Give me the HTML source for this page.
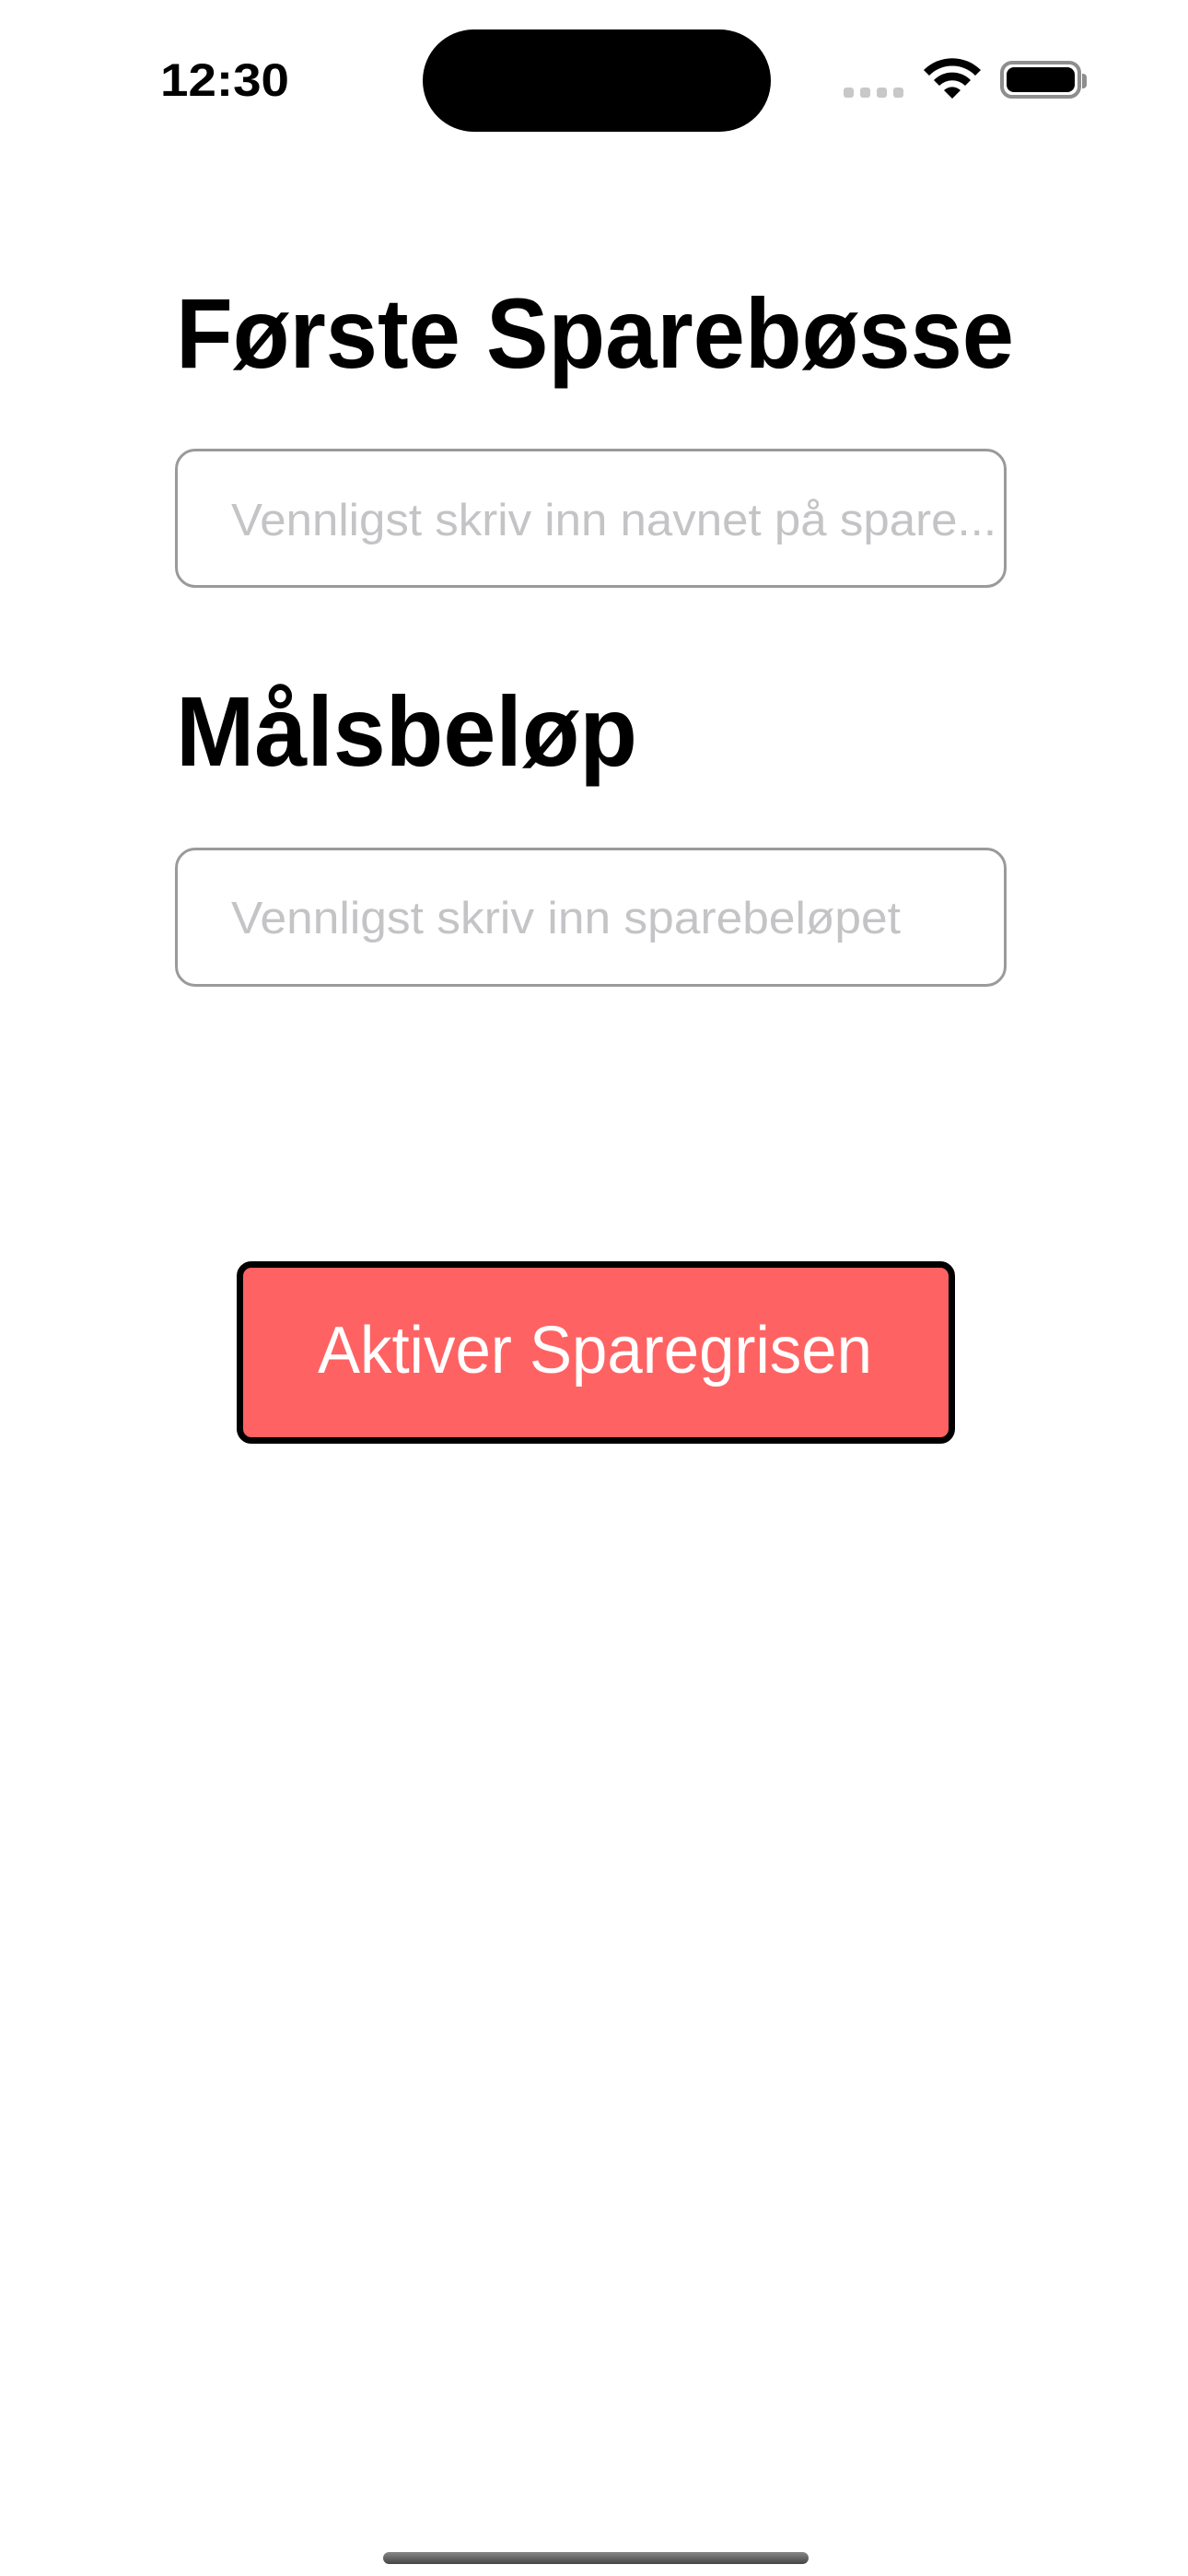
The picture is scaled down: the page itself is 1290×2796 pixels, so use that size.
<!DOCTYPE html>
<html><head><meta charset="utf-8">
<style>
html,body{margin:0;padding:0;background:#fff;}
body{width:1290px;height:2796px;position:relative;overflow:hidden;font-family:"Liberation Sans",sans-serif;}
.abs{position:absolute;}
.island{left:459px;top:32px;width:378px;height:111px;background:#000;border-radius:56px;}
.dot{top:95px;width:11px;height:11px;border-radius:3px;background:#c8c8c8;}
.input{left:190px;width:903px;height:151px;border:3px solid #9a9a9a;border-radius:22px;box-sizing:border-box;}
.btn{left:257px;top:1369px;width:780px;height:198px;background:#ff6262;border:7px solid #000;border-radius:16px;box-sizing:border-box;}
.home{left:416px;top:2770px;width:462px;height:13px;border-radius:7px;background:linear-gradient(#888,#444);}
svg{position:absolute;left:0;top:0;}
</style></head><body>
<div class="abs island"></div>
<div class="abs dot" style="left:916px"></div>
<div class="abs dot" style="left:934px"></div>
<div class="abs dot" style="left:952px"></div>
<div class="abs dot" style="left:970px"></div>
<div class="abs" style="left:1086px;top:66px;width:88px;height:41px;border:4px solid #8e8e8e;border-radius:13px;box-sizing:border-box;"></div>
<div class="abs" style="left:1093px;top:73px;width:74px;height:27px;background:#000;border-radius:8px;"></div>
<div class="abs" style="left:1175px;top:80px;width:5px;height:16px;background:#8e8e8e;border-radius:0 4px 4px 0;"></div>
<div class="abs input" style="top:487px"></div>
<div class="abs input" style="top:920px"></div>
<div class="abs btn"></div>
<div class="abs home"></div>
<svg width="1290" height="2796" viewBox="0 0 1290 2796">
  <g transform="translate(1034,107)" fill="#000">
    <path d="M0 0 L-9 -9 A13 13 0 0 1 9 -9 Z"/>
    <path d="M-14 -14 A20 20 0 0 1 14 -14 L20 -20 A28 28 0 0 0 -20 -20 Z"/>
    <path d="M-25 -25 A35 35 0 0 1 25 -25 L31 -31 A44 44 0 0 0 -31 -31 Z"/>
  </g>
  <text x="174" y="104" font-family="Liberation Sans" font-weight="bold" font-size="50" textLength="140" lengthAdjust="spacingAndGlyphs">12:30</text>
  <text x="191" y="399" font-family="Liberation Sans" font-weight="bold" font-size="108" textLength="910" lengthAdjust="spacingAndGlyphs">Første Sparebøsse</text>
  <text x="251" y="581" font-family="Liberation Sans" font-size="49" fill="#c4c4c7" textLength="831" lengthAdjust="spacingAndGlyphs">Vennligst skriv inn navnet på spare...</text>
  <text x="191" y="831" font-family="Liberation Sans" font-weight="bold" font-size="108" textLength="501" lengthAdjust="spacingAndGlyphs">Målsbeløp</text>
  <text x="251" y="1013" font-family="Liberation Sans" font-size="49" fill="#c4c4c7" textLength="727" lengthAdjust="spacingAndGlyphs">Vennligst skriv inn sparebeløpet</text>
  <text x="345" y="1490" font-family="Liberation Sans" font-size="72" fill="#fff" textLength="602" lengthAdjust="spacingAndGlyphs">Aktiver Sparegrisen</text>
</svg>
</body></html>
